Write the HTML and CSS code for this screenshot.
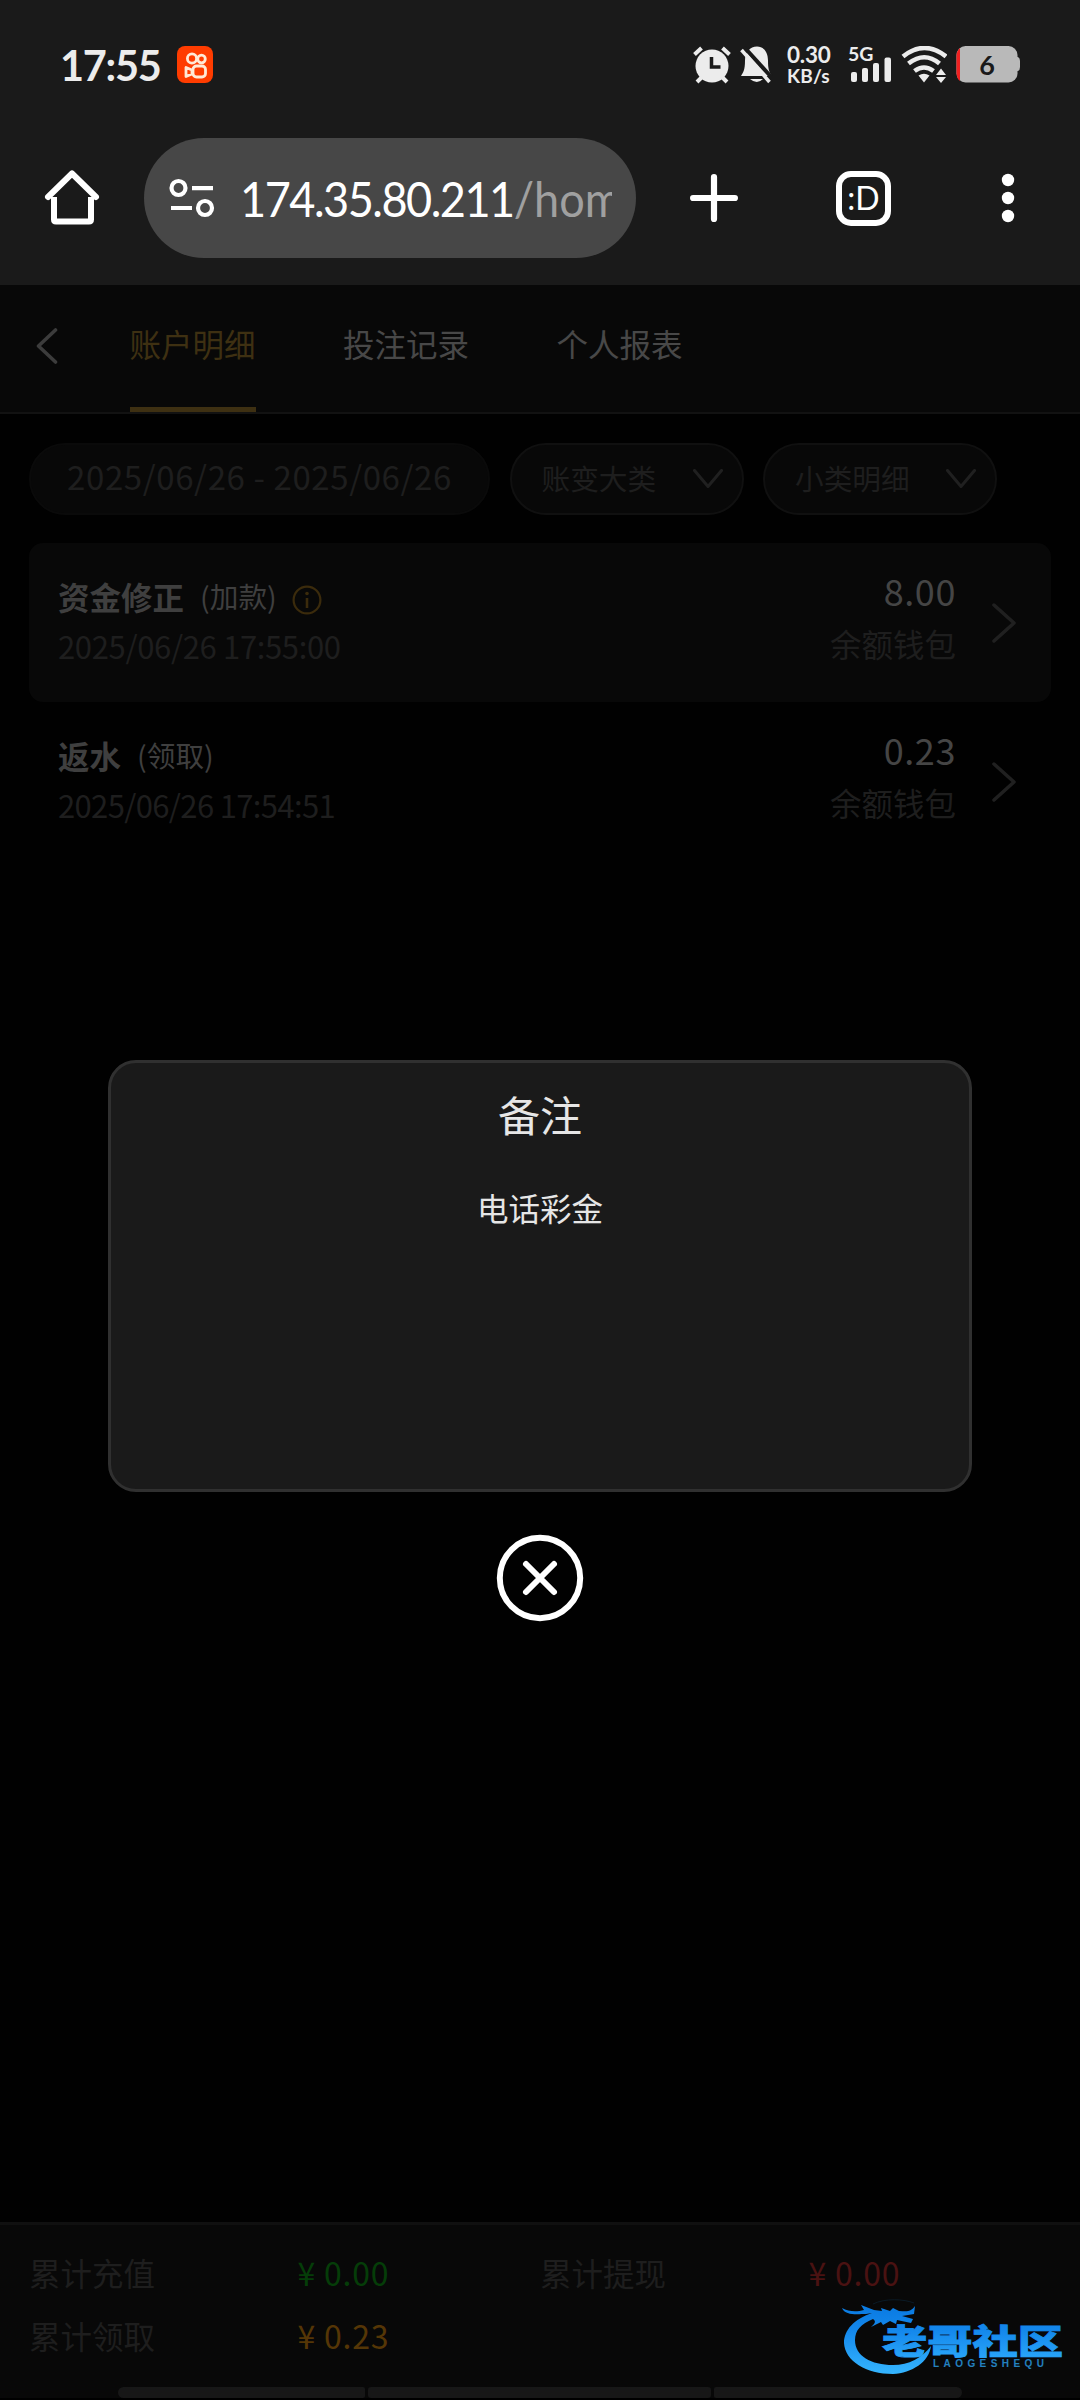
FILE: index.html
```html
<!DOCTYPE html>
<html lang="zh-CN">
<head>
<meta charset="utf-8">
<meta name="viewport" content="width=1080">
<title>账户明细</title>
<link rel="stylesheet" href="styles.css">
</head>
<body>
<div class="screen">
  <header class="browser">
    <div class="status">
      <span class="clock">17:55</span>
      <svg class="app-icon" width="36" height="37" viewBox="177 46 36 37">
        <rect x="177" y="46" width="36" height="37" rx="8" fill="#ff3c00"/>
        <g fill="none" stroke="#ffe9d6" stroke-width="2.8">
          <circle cx="192" cy="58.500" r="4.600"/><circle cx="201.500" cy="59" r="3.800"/>
          <rect x="193" y="66" width="12.500" height="11" rx="3.500"/>
          <path d="M192 70l-6-2.500v9l6-2.500z" stroke-linejoin="round"/>
        </g>
      </svg>
      <svg class="alarm" width="38" height="38" viewBox="693 46 38 38">
        <circle cx="712" cy="66" r="16.500" fill="#ececec"/>
        <g fill="none" stroke="#ececec" stroke-width="4"><path d="M694.500 54.500l7-6.500M729.500 54.500l-7-6.500M702 77l-5 5M722 77l5 5"/></g>
        <path d="M711.500 57v10h9" fill="none" stroke="#1a1a1a" stroke-width="3.500"/>
      </svg>
      <svg class="bell" width="33" height="38" viewBox="740 46 33 38">
        <path d="M757 46.500c-7 0-12 6-12 14 0 10-2 12-4 15.500h31c-3-4-4-7-4-15.500 0-8-4-14-11-14z" fill="#ececec"/>
        <path d="M750 79h13q-6 6-13 0z" fill="#ececec"/>
        <path d="M744 47l30 33" stroke="#1a1a1a" stroke-width="4"/>
        <path d="M741.500 50l28 32" stroke="#ececec" stroke-width="3.500"/>
      </svg>
      <div class="speed"><span class="speed-num">0.30</span><span class="speed-unit">KB/s</span></div>
      <div class="cell">
        <span class="net">5G</span>
        <svg width="42" height="26" viewBox="850 57 42 26" fill="#ececec">
          <rect x="851" y="72" width="6" height="10" rx="2"/><rect x="862" y="68" width="6" height="14" rx="2"/><rect x="873" y="63" width="6" height="19" rx="2"/><rect x="884.500" y="57.500" width="6.500" height="24.500" rx="2"/>
        </svg>
      </div>
      <svg class="wifi" width="46" height="38" viewBox="901 46 46 38">
        <g fill="none" stroke="#ececec" stroke-width="4.600"><path d="M903 56.500q21.500-17 43 0M908.500 63.500q16-12.500 31 0M914.500 71q9.500-7 19 0"/></g>
        <path d="M918.500 75.500q5.500-3.500 11 0l-5.500 7z" fill="#ececec"/>
        <path d="M936 75l5-6.500 5 6.500zM936 77l5 6 5-6z" fill="#ececec"/>
      </svg>
      <svg class="battery" width="64" height="37" viewBox="956 46 64 37">
        <rect x="956.500" y="46" width="61" height="36.500" rx="9" fill="#b9b9b9"/>
        <path d="M1016 57h2q2 1 2 4v6q0 3-2 4h-2z" fill="#b9b9b9"/>
        <path d="M960 48v33q-3.500-3-3.500-8V56q0-5 3.500-8z" fill="#f02020"/>
        <text class="battery-level" x="987" y="74.500" text-anchor="middle">6</text>
      </svg>
    </div>
    <div class="toolbar">
      <svg class="home" width="56" height="58" viewBox="44 170 56 58" fill="none" stroke="#fff" stroke-width="6">
        <path d="M54 198v22.500q0 2 2 2h33q2 0 2-2V198" /><path d="M48 198l24-23.500 24 23.500" stroke-linecap="round" stroke-linejoin="round"/>
      </svg>
      <div class="omnibox">
        <svg width="46" height="40" viewBox="169 178 46 40" fill="none" stroke="#fff" stroke-width="4.200">
          <circle cx="178.500" cy="188" r="7"/><path d="M192 188.200h21M171 208h21"/><circle cx="205" cy="208" r="7"/>
        </svg>
        <div class="url"><span class="address">174.35.80.211<span class="path">/home</span></span></div>
      </div>
      <svg class="plus" width="48" height="48" viewBox="0 0 48 48" stroke="#fff" stroke-width="6.200" stroke-linecap="round"><path d="M24 3.100v41.800M3.100 24h41.800"/></svg>
      <div class="tab-count">:D</div>
      <svg class="more" width="14" height="50" viewBox="0 0 14 50" fill="#fff"><circle cx="7" cy="7" r="6.200"/><circle cx="7" cy="25" r="6.200"/><circle cx="7" cy="43" r="6.200"/></svg>
    </div>
  </header>

  <nav class="tabs">
    <svg class="back" width="24" height="38" viewBox="0 0 24 38" fill="none" stroke="#3c3c3c" stroke-width="3.600" stroke-linecap="round" stroke-linejoin="round"><path d="M19.500 3L2.500 19l17 16"/></svg>
    <span class="tab active">账户明细</span>
    <span class="tab">投注记录</span>
    <span class="tab">个人报表</span>
  </nav>

  <main class="content">
    <div class="filters">
      <div class="pill date">2025/06/26 - 2025/06/26</div>
      <div class="pill select"><span>账变大类</span><svg width="30" height="20" viewBox="0 0 30 20"><path d="M1.500 1.500L15 17.500l13.500-16"/></svg></div>
      <div class="pill select"><span>小类明细</span><svg width="30" height="20" viewBox="0 0 30 20"><path d="M1.500 1.500L15 17.500l13.500-16"/></svg></div>
    </div>
    <div class="list">
      <article class="record shaded">
        <div class="info">
          <div class="title"><b>资金修正</b><span class="kind">(加款)</span>
            <svg class="hint" width="30" height="30" viewBox="0 0 30 30"><circle cx="15" cy="15" r="13.400" fill="none" stroke="#3b2b0c" stroke-width="2.200"/><path d="M15 13v10" stroke="#3b2b0c" stroke-width="2.600"/><circle cx="15" cy="8.500" r="1.800" fill="#3b2b0c"/></svg>
          </div>
          <div class="time">2025/06/26 17:55:00</div>
        </div>
        <div class="amount"><div class="value">8.00</div><div class="wallet">余额钱包</div></div>
        <svg class="go" width="26" height="40" viewBox="0 0 26 40"><path d="M3 2l20 18L3 38"/></svg>
      </article>
      <article class="record">
        <div class="info">
          <div class="title"><b>返水</b><span class="kind">(领取)</span></div>
          <div class="time second">2025/06/26 17:54:51</div>
        </div>
        <div class="amount"><div class="value">0.23</div><div class="wallet">余额钱包</div></div>
        <svg class="go" width="26" height="40" viewBox="0 0 26 40"><path d="M3 2l20 18L3 38"/></svg>
      </article>
    </div>
  </main>

  <footer class="totals">
    <div class="sums">
      <span>累计充值</span><span class="sum green">¥ 0.00</span><span>累计提现</span><span class="sum red">¥ 0.00</span>
      <span>累计领取</span><span class="sum gold">¥ 0.23</span>
    </div>
    <div class="segments"><i></i><i></i><i></i></div>
  </footer>

  <div class="dialog-layer">
    <section class="dialog"><h2>备注</h2><p>电话彩金</p></section>
    <svg class="close" width="88" height="88" viewBox="0 0 88 88" fill="none" stroke="#fff" stroke-width="6"><circle cx="44" cy="44" r="40.200"/><path d="M30 30l28 28M58 30L30 58" stroke-linecap="round"/></svg>
  </div>

  <svg class="brand" width="224" height="80" viewBox="840 2298 224 80">
    <defs><linearGradient id="blue" gradientUnits="userSpaceOnUse" x1="0" y1="2302" x2="0" y2="2374"><stop offset="0" stop-color="#0878e0"/><stop offset=".4" stop-color="#1488ec"/><stop offset="1" stop-color="#35b5ff"/></linearGradient></defs>
    <g fill="url(#blue)">
      <path d="M872 2313C854 2319 844 2330 844 2343C845 2361 866 2374 893 2374C912 2373 929 2362 931 2346C922 2358 909 2365 893 2365C871 2365 855 2356 855 2340C855 2330 861 2324 873 2319C877 2322 874 2324 871 2327L881 2322L883 2325L890 2321L896 2324L897 2320L911 2323L913 2319L902 2316L914 2314L915 2306C910 2313 906 2311 899 2311L893 2308L890 2311L881 2308L882 2311L874 2310L861 2305L864 2310C857 2312 849 2312 842 2308C845 2316 858 2314 866 2314Z"/>
      <path d="M873 2304c12-6 31-5 41-1" fill="none" stroke="#0a1a26" stroke-width="1"/>
      <text class="brand-name" x="882" y="2354" textLength="181" lengthAdjust="spacingAndGlyphs" stroke="url(#blue)" stroke-width=".8">老哥社区</text>
      <text class="brand-latin" x="933" y="2367" textLength="111" lengthAdjust="spacing" opacity=".75">LAOGESHEQU</text>
    </g>
  </svg>
</div>
</body>
</html>
```
FILE: styles.css
```css
* { box-sizing: border-box; }
body { margin: 0; background: #000; font-family: "Noto Sans CJK SC", sans-serif; }
svg { display: block; flex: none; }
.screen { position: relative; display: flex; flex-direction: column; width: 1080px; height: 2400px; overflow: hidden; background: #010101; white-space: nowrap; }

.browser { height: 285px; flex: none; background: #1a1a1a; }
.status { display: flex; align-items: flex-start; height: 138px; padding: 46px 60px 0 60px; }
.clock { width: 117px; font: 700 41.500px/38px Lato, sans-serif; letter-spacing: -1.300px; color: #ececec; }
.alarm { margin-left: 480px; }
.bell { margin-left: 9px; }
.speed { display: flex; flex-direction: column; width: 46px; margin-left: 14px; color: #ececec; font-family: Lato, sans-serif; font-weight: 700; }
.speed-num { font-size: 22.500px; line-height: 18px; letter-spacing: -.2px; }
.speed-unit { font-size: 19px; line-height: 20px; letter-spacing: .2px; margin-top: 2px; }
.cell { width: 45px; margin-left: 15px; color: #ececec; }
.net { display: block; height: 11px; font: 700 19.500px/16px Lato, sans-serif; }
.cell svg { margin-left: 2px; }
.wifi { margin-left: 8px; }
.battery { margin-left: 9px; overflow: visible; }
.battery-level { font: 700 27px Lato, sans-serif; fill: #1a1a1a; }

.toolbar { display: flex; align-items: center; height: 120px; padding-left: 44px; }
.omnibox { display: flex; align-items: center; width: 492px; height: 120px; margin-left: 44px; padding: 0 24px 0 25px; border-radius: 60px; background: #474747; }
.url { flex: 1; min-width: 0; margin-left: 25px; overflow: hidden; font: 400 49px/60px Lato, sans-serif; color: #fff; }
.address { display: inline-block; transform: scaleX(.92); transform-origin: left; letter-spacing: -1.650px; }
.path { color: #a0a0a0; letter-spacing: 0; }
.plus { margin-left: 54px; }
.tab-count { width: 55px; height: 55px; margin-left: 98px; border: 6px solid #fff; border-radius: 15px; color: #fff; font: 400 32px/41px Lato, sans-serif; text-align: center; }
.more { margin-left: 110px; }

.tabs { display: flex; align-items: stretch; height: 129px; flex: none; padding-left: 36px; gap: 87.500px; border-bottom: 2px solid #121212; background: #080808; }
.back { margin: 42px -18px 0 0; }
.tab { padding-top: 36px; border-bottom: 5px solid transparent; font-size: 31.500px; line-height: 44px; color: #484848; }
.tab.active { border-color: #3e3012; color: #3e3012; }

.content { flex: 1; padding: 29px 29px 0; }
.filters { display: flex; gap: 19.500px; }
.pill { height: 72px; border-radius: 36px; border: 2px solid #101010; background: #080808; color: #1e1e1e; line-height: 62px; }
.date { width: 461px; border-color: #0a0a0a; font-size: 33px; letter-spacing: .6px; text-align: center; }
.select { display: flex; align-items: center; justify-content: space-between; width: 234px; padding: 0 19px 0 30px; font-size: 28.700px; }
.select span { margin-top: -3px; }
.select svg { fill: none; stroke: #202020; stroke-width: 3; stroke-linecap: round; stroke-linejoin: round; }
.list { margin-top: 28px; }
.record { display: flex; height: 159px; padding: 0 34px 0 29px; border-radius: 14px; }
.shaded { background: #080808; }
.info { flex: 1; }
.title { display: flex; align-items: center; height: 44px; margin-top: 31px; font-size: 31.500px; line-height: 44px; color: #3f3f3f; }
.kind { margin-left: 16px; font-size: 28.700px; }
.hint { margin: 8px 0 0 15px; }
.time { margin-top: 6px; font-size: 31px; line-height: 44px; letter-spacing: -.35px; color: #1e1e1e; }
.second { letter-spacing: -.65px; }
.amount { text-align: right; }
.value { margin-top: 25px; font-size: 36px; line-height: 44px; letter-spacing: .6px; color: #454545; }
.wallet { margin-top: 9px; font-size: 31.500px; line-height: 44px; color: #1e1e1e; }
.go { margin: 60px 0 0 35px; fill: none; stroke: #202020; stroke-width: 3.500; stroke-linecap: round; stroke-linejoin: round; }

.totals { display: flex; flex-direction: column; justify-content: space-between; height: 178px; flex: none; border-top: 3px solid #101010; border-bottom: 2px solid #000; background: #080808; }
.sums { display: grid; grid-template-columns: 268.500px 242.500px 268.500px auto; grid-auto-rows: 62.500px; padding: 16px 0 0 29px; font-size: 31.500px; line-height: 62.500px; color: #1e1e1e; }
.sum { font-size: 32px; letter-spacing: .8px; }
.green { color: #053d08; }
.red { color: #4a1212; }
.gold { color: #553606; }
.segments { display: grid; grid-template-columns: 247px 343px 248px; gap: 3px; padding-left: 118px; }
.segments i { height: 11px; border-radius: 3px; background: #171717; }
.segments i:first-child { border-radius: 8px 3px 3px 8px; }
.segments i:last-child { border-radius: 3px 8px 8px 3px; }

.dialog-layer { position: absolute; top: 1060px; left: 108px; display: flex; flex-direction: column; align-items: center; }
.dialog { width: 864px; height: 432px; border: 3px solid #303030; border-radius: 28px; background: #1a1a1a; color: #e6e6e6; text-align: center; }
.dialog h2 { margin: 21px 0 0; font-size: 42px; line-height: 60px; font-weight: 400; }
.dialog p { margin: 41px 0 0; font-size: 31.500px; line-height: 44px; }
.close { margin-top: 42px; }

.brand { position: absolute; left: 840px; top: 2298px; }
.brand-name { font: 900 34px "Noto Sans CJK SC", sans-serif; }
.brand-latin { font: 700 10px "Liberation Sans", sans-serif; }
```
